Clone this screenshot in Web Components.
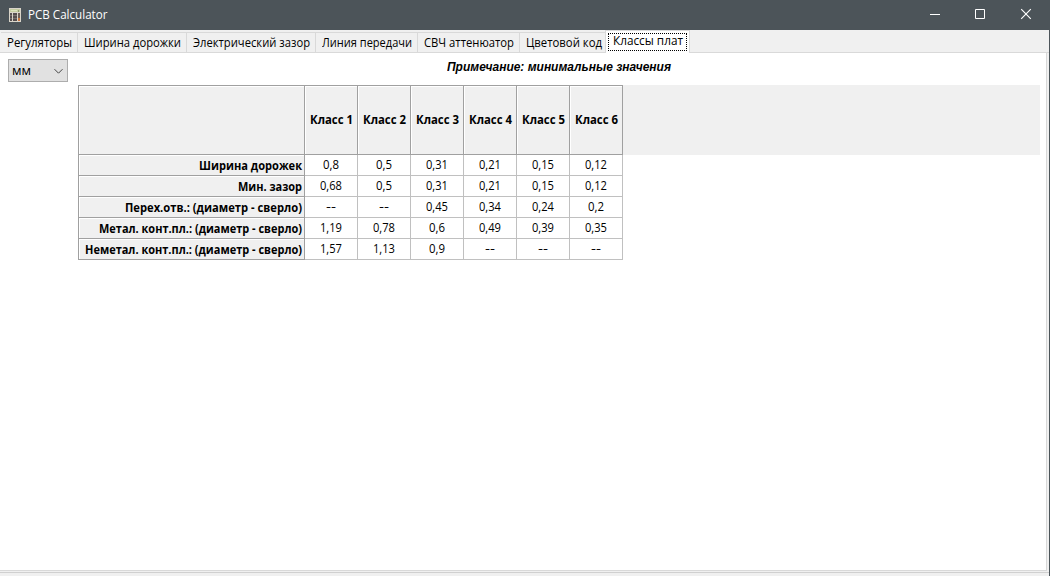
<!DOCTYPE html>
<html lang="ru">
<head>
<meta charset="utf-8">
<title>PCB Calculator</title>
<style>
html,body{margin:0;height:100%;overflow:hidden;background:#f0f0f0}
body{font:12px/16px "Open Sans","Noto Sans",sans-serif;color:#000}
</style>
</head>
<body>
<calc-window></calc-window>
<script>
const define = (name, html, setup) => customElements.define(name, class extends HTMLElement {
  constructor() {
    super();
    const t = document.createElement('template');
    t.innerHTML = html;
    this.attachShadow({mode: 'open'}).appendChild(t.content.cloneNode(true));
  }
  connectedCallback() { if (setup) setup(this, this.shadowRoot); }
});

/* Label condensed or widened to a fixed width (attribute w, in px). */
define('fit-label', `<style>
:host{display:inline-block;white-space:nowrap;text-align:left}
span{display:inline-block;white-space:nowrap;transform-origin:0 50%}
</style><span><slot></slot></span>`, (el, root) => {
  const w = +el.getAttribute('w');
  if (!w) return;
  el.style.width = w + 'px';
  const span = root.querySelector('span');
  const fit = () => {
    span.style.transform = 'none';
    const natural = span.getBoundingClientRect().width;
    if (natural) span.style.transform = 'scaleX(' + w / natural + ')';
  };
  requestAnimationFrame(fit);
  fit();
});

define('title-bar', `<style>
:host{display:flex;height:30px;background:#4c5459;color:#fff;align-items:center;box-sizing:border-box;padding-left:9px}
.name{margin-left:7px;flex:1;display:flex}
.btn{width:45px;height:30px;display:block}
.btn.close{width:47px}
.app{margin-top:-1px}
</style>
<svg class="app" width="12" height="14" viewBox="0 0 12 14" shape-rendering="crispEdges">
<path fill="#d9d4c9" d="M0 0h12v14H0z"/><path fill="#c5cda2" d="M1 1h10v3H1z"/><path fill="#dce2bd" d="M2 2h6v1H2z"/><path fill="#8f9970" d="M9 2h1v2H9z"/>
<path fill="#554e4f" d="M1 5h2v8H1zM4 5h4v8H4z"/><path fill="#77706d" d="M1 7h2v1H1zM1 10h2v1H1zM4 7h4v1H4zM4 10h4v1H4z"/>
<path fill="#6d5d55" d="M9 5h2v5H9z"/><path fill="#c8763f" d="M9 10h2v3H9z"/>
</svg>
<span class="name"><fit-label w="79.5">PCB Calculator</fit-label></span>
<svg class="btn" viewBox="0 0 45 30"><path fill="#fff" d="M17 14h10v1H17z"/></svg>
<svg class="btn" viewBox="0 0 45 30"><path fill="none" stroke="#fff" d="M17.5 9.5h9v9h-9z"/></svg>
<svg class="btn close" viewBox="0 0 47 30"><path stroke="#fff" stroke-width="1.15" d="M18.2 9.2l9.6 9.6M27.8 9.2l-9.6 9.6"/></svg>`);

define('tab-item', `<style>
:host{display:flex;box-sizing:border-box;height:20px;margin-top:2px;border-top:1px solid #d9d9d9;border-right:1px solid #d9d9d9;background:#f0f0f0;padding:2px 0 0 6px;flex:none}
:host([selected]){height:23px;margin:0 0 -1px;border:1px solid #d9d9d9;border-bottom:0;background:#fff;padding:2px 1px 1px 2px}
.focus{display:flex}
:host([selected]) .focus{box-sizing:border-box;width:79px;height:18px;border:1px dotted #000;padding:0 0 0 4px}
:host([selected]) .focus ::slotted(*){margin-top:-1px}
</style><div class="focus"><slot></slot></div>`);

define('tab-strip', `<style>
:host{display:flex;height:22px;padding-left:1px;border-bottom:1px solid #d9d9d9;background:#f0f0f0}
tab-item:first-child{border-left:1px solid #d9d9d9;padding-left:5px}
</style>
<tab-item style="width:77px"><fit-label w="65">Регуляторы</fit-label></tab-item>
<tab-item style="width:109px"><fit-label w="97">Ширина дорожки</fit-label></tab-item>
<tab-item style="width:129px"><fit-label w="117">Электрический зазор</fit-label></tab-item>
<tab-item style="width:102px"><fit-label w="90">Линия передачи</fit-label></tab-item>
<tab-item style="width:102px"><fit-label w="90">СВЧ аттенюатор</fit-label></tab-item>
<tab-item style="width:85px;border-right:0"><fit-label w="76">Цветовой код</fit-label></tab-item>
<tab-item selected style="width:85px"><fit-label w="70">Классы плат</fit-label></tab-item>`);

define('unit-select', `<style>
:host{display:flex;box-sizing:border-box;width:60px;height:23px;border:1px solid #adadad;background:#e1e1e1;padding:3px 3px 0;justify-content:space-between}
svg{margin-top:5px}
</style><fit-label w="19">мм</fit-label>
<svg width="11" height="7" viewBox="0 0 11 7"><path fill="none" stroke="#444" d="M1.5 1.2l4 4 4-4"/></svg>`);

define('class-grid', `<style>
:host{display:block;background:linear-gradient(#f0f0f0 70px,#fff 70px)}
.grid{display:grid;grid-template-columns:227px repeat(6,53px);grid-template-rows:70px repeat(5,21px);width:545px;background:#fff}
.grid>div{box-sizing:border-box;display:flex;align-items:center;justify-content:center;border-right:1px solid #c0c0c0;border-bottom:1px solid #c0c0c0;padding-bottom:1px}
.grid>.head{background:#f0f0f0;border-color:#a0a0a0;font-weight:bold;box-shadow:inset 1px 1px #fff}
.grid>.col{border-top:1px solid #a0a0a0;padding-left:1px}
.grid>.row{border-left:1px solid #a0a0a0;justify-content:flex-end;padding:1px 2px 0 0}
</style><div class="grid"></div>`, (el, root) => {
  const rows = [
    ['Ширина дорожек', 103, '0,8', '0,5', '0,31', '0,21', '0,15', '0,12'],
    ['Мин. зазор', 64, '0,68', '0,5', '0,31', '0,21', '0,15', '0,12'],
    ['Перех.отв.: (диаметр - сверло)', 177, '--', '--', '0,45', '0,34', '0,24', '0,2'],
    ['Метал. конт.пл.: (диаметр - сверло)', 203, '1,19', '0,78', '0,6', '0,49', '0,39', '0,35'],
    ['Неметал. конт.пл.: (диаметр - сверло)', 217, '1,57', '1,13', '0,9', '--', '--', '--']];
  let h = '<div class="head row col"></div>';
  for (let i = 1; i <= 6; i++) h += `<div class="head col"><fit-label w="43">Класс ${i}</fit-label></div>`;
  for (const [name, w, ...v] of rows) {
    h += `<div class="head row"><fit-label w="${w}">${name}</fit-label></div>`;
    for (const x of v) h += `<div><fit-label w="${{2: 10, 3: 16, 4: 22}[x.length]}">${x}</fit-label></div>`;
  }
  root.querySelector('.grid').innerHTML = h;
});

define('tab-page', `<style>
:host{display:flex;flex:1;box-sizing:border-box;background:#fff;border-right:1px solid #d9d9d9;border-bottom:1px solid #d9d9d9;margin-right:2px}
.side{width:70px;padding:6px 0 0 8px;flex:none}
.main{flex:1;padding-right:6px}
.note{height:32px;box-sizing:border-box;padding-top:6px;text-align:center;font:italic bold 12px/16px "Liberation Sans",Arial,sans-serif}
</style>
<div class="side"><unit-select></unit-select></div>
<div class="main"><div class="note"><fit-label w="224">Примечание: минимальные значения</fit-label></div><class-grid></class-grid></div>`);

define('calc-window', `<style>
:host{display:flex;flex-direction:column;width:1050px;height:576px;background:#f0f0f0}
.body{flex:1;display:flex;flex-direction:column;border-right:1px solid #4c5459}
.status{height:5px;box-sizing:border-box;padding-top:1px}
.status::before{content:"";display:block;height:1px;background:#d0d0d0}
</style><title-bar></title-bar><div class="body"><tab-strip></tab-strip><tab-page></tab-page><div class="status"></div></div>`);
</script>
</body>
</html>
